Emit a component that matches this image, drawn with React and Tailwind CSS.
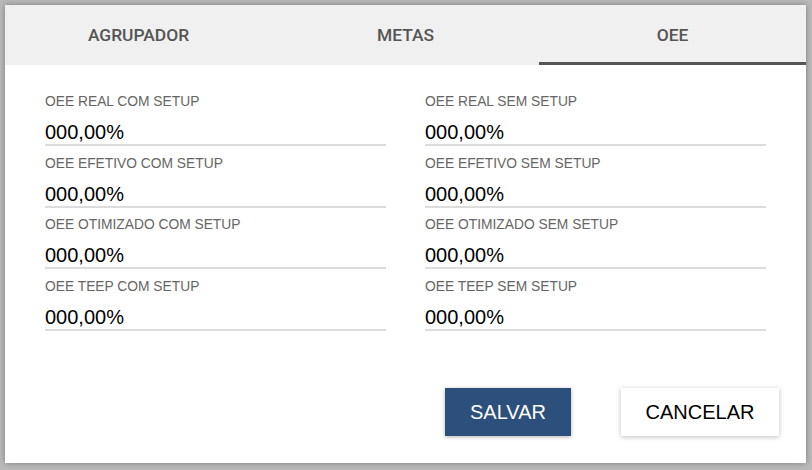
import { useState } from "react";

const tabs = ["AGRUPADOR", "METAS", "OEE"];

const fields = [
  ["OEE REAL COM SETUP", "OEE REAL SEM SETUP"],
  ["OEE EFETIVO COM SETUP", "OEE EFETIVO SEM SETUP"],
  ["OEE OTIMIZADO COM SETUP", "OEE OTIMIZADO SEM SETUP"],
  ["OEE TEEP COM SETUP", "OEE TEEP SEM SETUP"],
];

function Field({ label, value }) {
  return (
    <div className="flex flex-col">
      <label className="h-[16px] text-[13.8px] leading-[16px] text-[#666]">
        {label}
      </label>
      <div className="mt-[10px] h-[26px] border-b-2 border-[#dcdcdc] text-[20px] leading-[24px] text-black">
        {value}
      </div>
    </div>
  );
}

export default function App() {
  const [active, setActive] = useState(2);

  return (
    <div className="w-[812px] h-[470px] bg-[#bababa] pt-[5px] pl-[5px] font-['Liberation_Sans',Arial,sans-serif]">
      <div className="w-[801px] h-[458px] bg-white flex flex-col shadow-[0_0_6px_rgba(0,0,0,0.35)]">
        {/* ─── Tabs ─── */}
        <div className="grid grid-cols-3 h-[60px] bg-[#f0f0f0] shrink-0">
          {tabs.map((t, i) => (
            <button
              key={t}
              onClick={() => setActive(i)}
              className={`flex items-center justify-center pt-[3px] font-['Roboto',sans-serif] font-medium text-[17.4px] text-[#555] border-b-[3px] ${
                active === i ? "border-[#555]" : "border-transparent"
              }`}
            >
              {t}
            </button>
          ))}
        </div>

        {/* ─── Campos ─── */}
        <div className="grid grid-cols-2 gap-x-[39px] gap-y-[9.5px] px-10 pt-[29px]">
          {fields.map(([left, right]) => [
            <Field key={left} label={left} value="000,00%" />,
            <Field key={right} label={right} value="000,00%" />,
          ])}
        </div>

        {/* ─── Botões ─── */}
        <div className="flex justify-end gap-[50px] pr-[27px] mt-auto mb-[27px]">
          <button className="w-[126px] h-[48px] bg-[#2c4f7c] text-white text-[20px] shadow-[0_1px_4px_rgba(0,0,0,0.3)]">
            SALVAR
          </button>
          <button className="w-[158px] h-[48px] bg-white text-black text-[20px] shadow-[0_1px_5px_rgba(0,0,0,0.25)]">
            CANCELAR
          </button>
        </div>
      </div>
    </div>
  );
}
